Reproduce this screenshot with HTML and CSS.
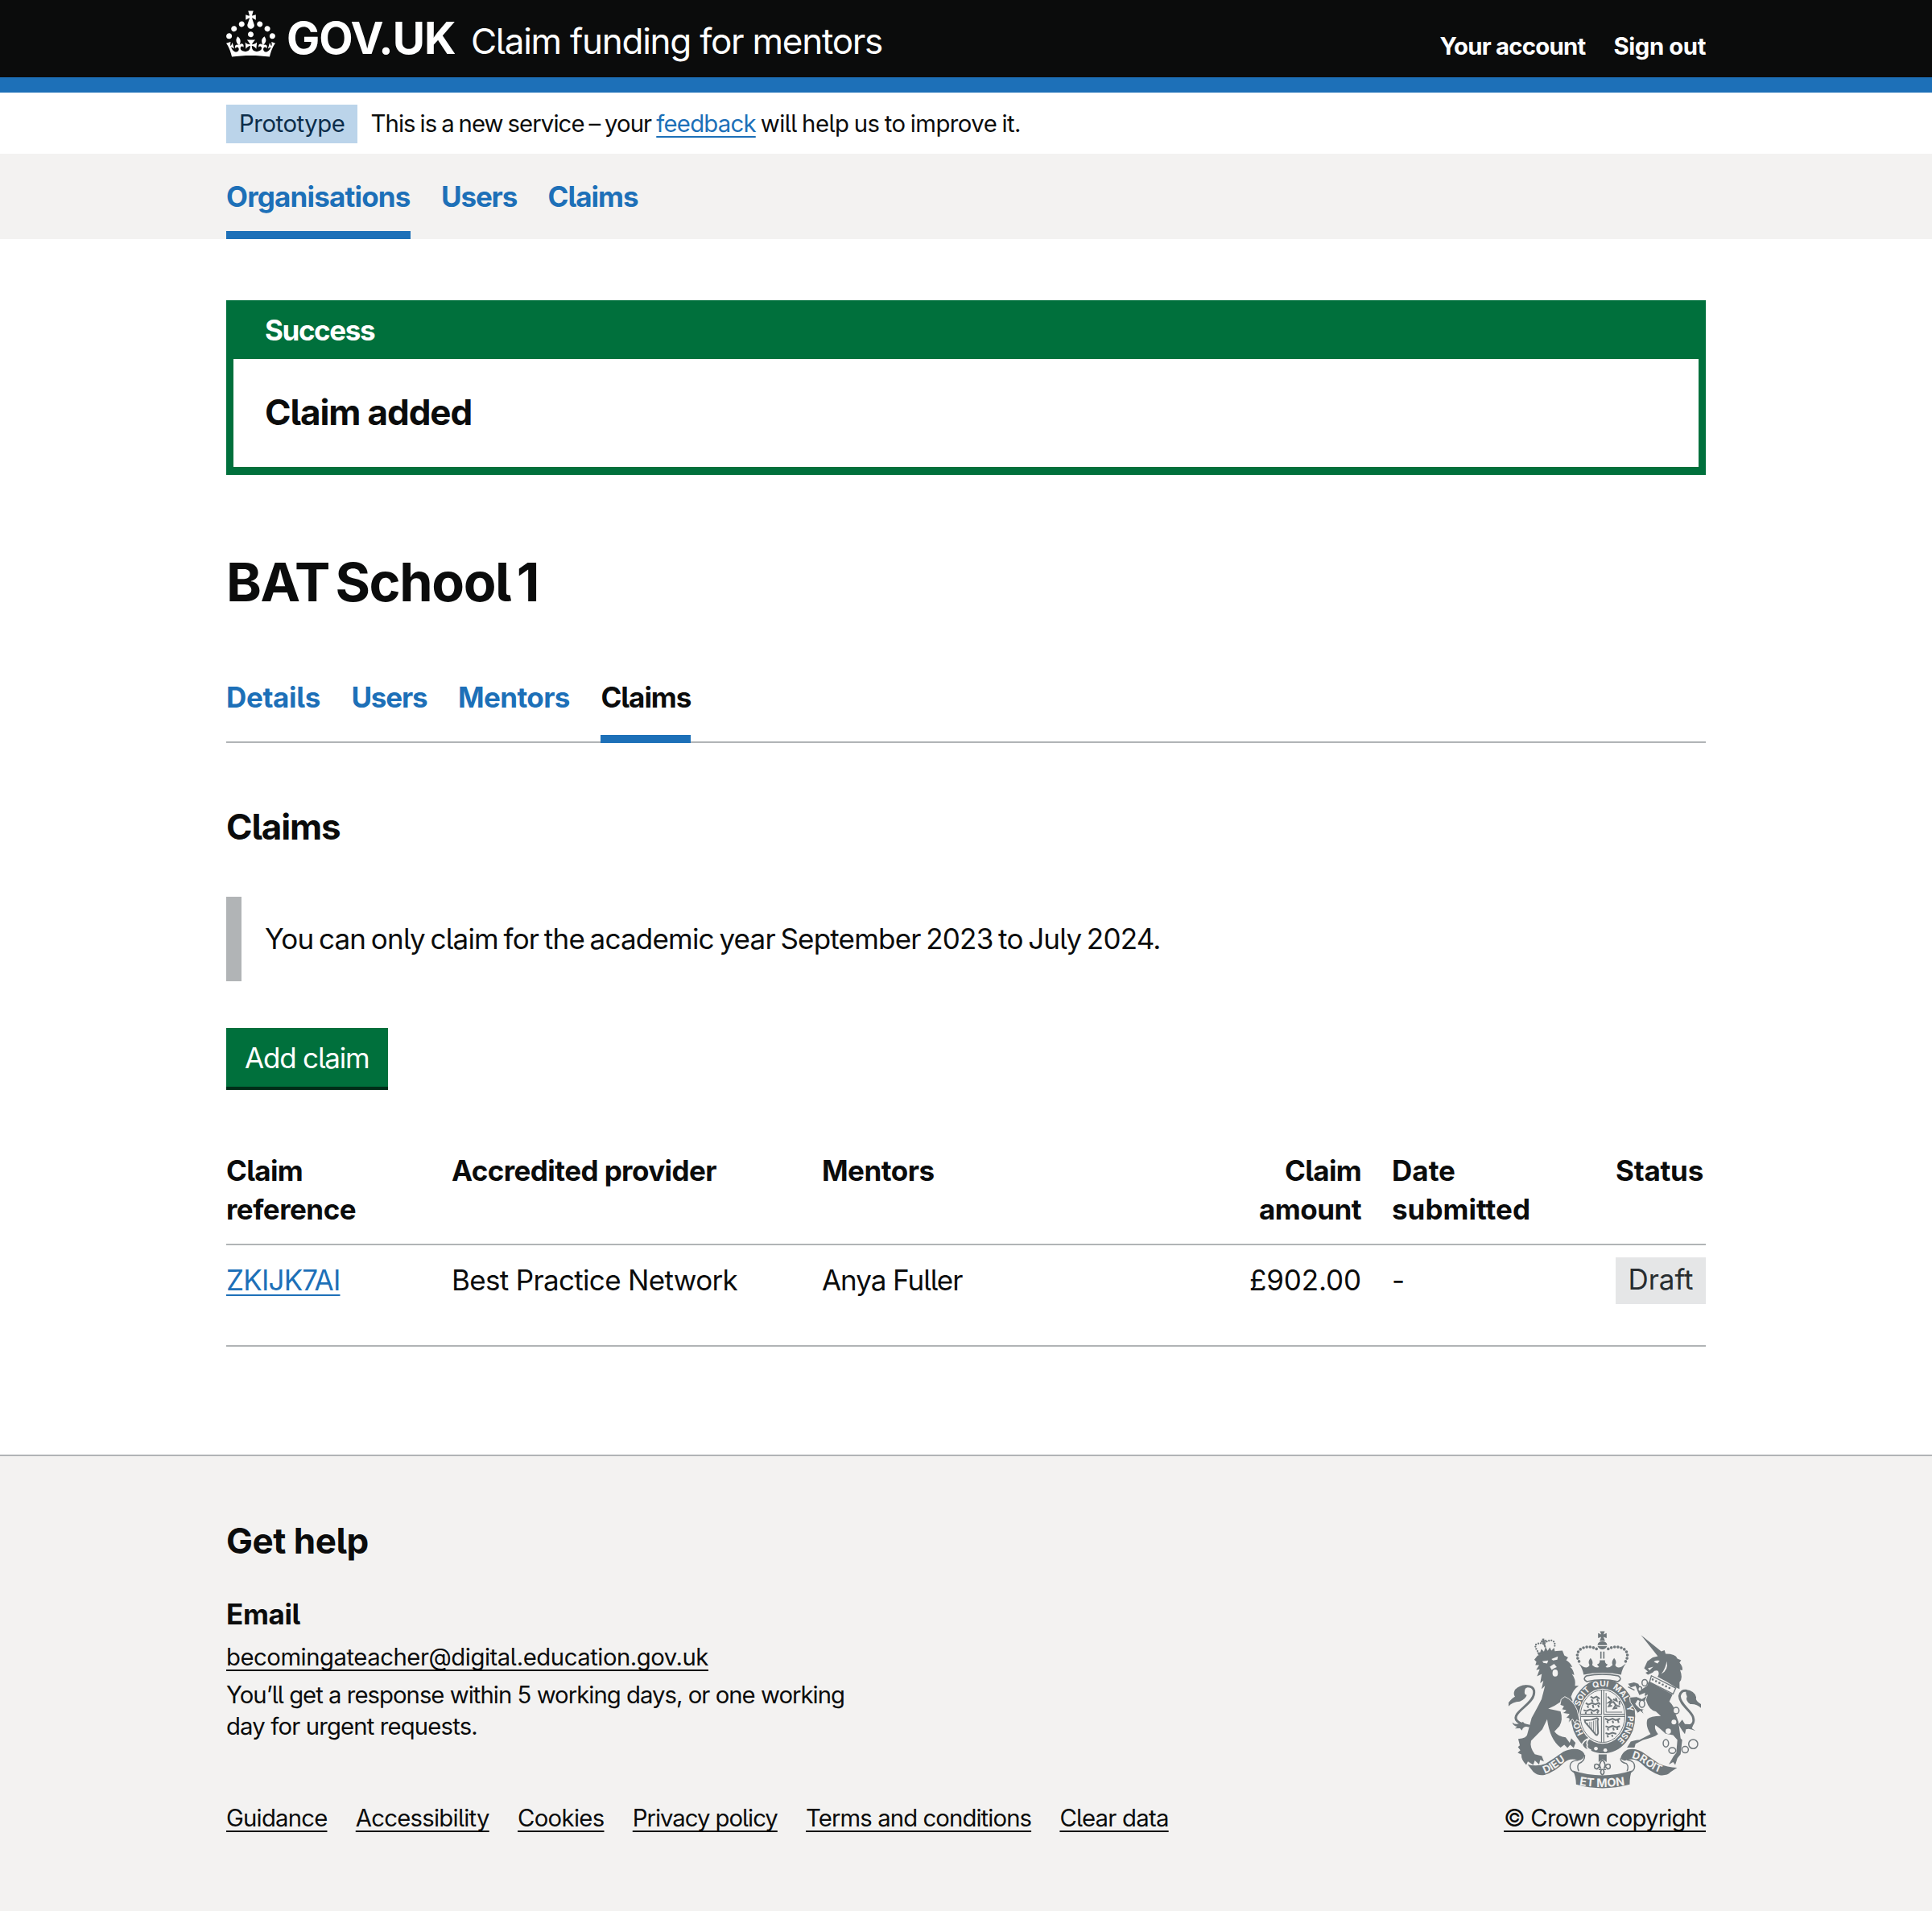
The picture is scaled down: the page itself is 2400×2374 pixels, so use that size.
FILE: index.html
```html
<!DOCTYPE html>
<html lang="en">
<head>
<meta charset="utf-8">
<title>BAT School 1 - Claim funding for mentors - GOV.UK</title>
<link rel="stylesheet" href="styles.css">
</head>
<body>
<header class="header">
  <div class="container header-inner">
    <svg class="crown" viewBox="0 0 32 30" fill="#fff" aria-hidden="true"><path d="M22.6 10.4c-1 .4-2-.1-2.4-1-.4-.9.1-2 1-2.4.9-.4 2 .1 2.4 1s-.1 2-1 2.4m-5.9 6.7c-.9.4-2-.1-2.4-1-.4-.9.1-2 1-2.4.9-.4 2 .1 2.4 1s-.1 2-1 2.4m10.8-3.7c-1 .4-2-.1-2.4-1-.4-.9.1-2 1-2.4.9-.4 2 .1 2.4 1s0 2-1 2.4m3.3 4.8c-1 .4-2-.1-2.4-1-.4-.9.1-2 1-2.4.9-.4 2 .1 2.4 1s-.1 2-1 2.4M17 4.7l2.3 1.2V2.5l-2.3.7-.2-.2.9-3h-3.4l.9 3-.2.2c-.1.1-2.3-.7-2.3-.7v3.4L15 4.7c.1.1.1.2.2.2l-1.3 4c-.1.2-.1.4-.1.6 0 1.1.8 2 1.9 2.2h.7c1-.2 1.9-1.1 1.9-2.1 0-.2 0-.4-.1-.6l-1.3-4c-.1-.2 0-.2.1-.3m-7.6 5.7c.9.4 2-.1 2.4-1 .4-.9-.1-2-1-2.4-.9-.4-2 .1-2.4 1s0 2 1 2.4m-5 3c.9.4 2-.1 2.4-1 .4-.9-.1-2-1-2.4-.9-.4-2 .1-2.4 1s.1 2 1 2.4m-3.2 4.8c.9.4 2-.1 2.4-1 .4-.9-.1-2-1-2.4-.9-.4-2 .1-2.4 1s0 2 1 2.4m14.8 11c4.4 0 8.6.3 12.3.8 1.1-4.5 2.4-7 3.7-8.8l-2.5-.9c.2 1.3.3 1.9 0 2.7-.4-.4-.8-1.1-1.1-2.3l-1.2 4c.7-.5 1.3-.8 2-.9-1.1 2.5-2.6 3.1-3.5 3-1.1-.2-1.7-1.2-1.5-2.1.3-1.2 1.5-1.5 2.1-.1 1.1-2.3-.8-3-2-2.3 1.9-1.9 2.1-3.5.6-5.6-2.1 1.6-2.1 3.2-1.2 5.5-1.2-1.4-3.2-.6-2.5 1.6.9-1.4 2.1-.5 1.9.8-.2 1.1-1.7 2.1-3.5 1.9-2.7-.2-2.9-2.1-2.9-3.6.7-.1 1.9.5 2.9 1.9l.4-4.3c-1.1 1.1-2.1 1.4-3.2 1.4.4-1.2 2.1-3 2.1-3h-5.4s1.7 1.9 2.1 3c-1.1 0-2.1-.2-3.2-1.4l.4 4.3c1-1.4 2.2-2 2.9-1.9-.1 1.5-.2 3.4-2.9 3.6-1.9.2-3.4-.8-3.5-1.9-.2-1.3 1-2.2 1.9-.8.7-2.3-1.2-3-2.5-1.6.9-2.2.9-3.9-1.2-5.5-1.5 2-1.3 3.7.6 5.6-1.2-.7-3.1 0-2 2.3.6-1.4 1.8-1.1 2.1.1.2.9-.3 1.9-1.5 2.1-.9.2-2.4-.5-3.5-3 .6 0 1.2.3 2 .9l-1.2-4c-.3 1.1-.7 1.9-1.1 2.3-.3-.8-.2-1.4 0-2.7l-2.9.9C1.3 23 2.6 25.5 3.7 30c3.7-.5 7.9-.8 12.3-.8"/></svg>
    <span class="wordmark">GOV.UK</span>
    <span class="service-name">Claim funding for mentors</span>
    <nav class="account-nav"><a class="tk-25">Your account</a><a class="tk-14">Sign out</a></nav>
  </div>
</header>
<div class="container phase">
  <span class="tag tag-phase">Prototype</span>
  <p class="phase-text"><span class="tk-31">This is a new service – your</span> <a class="link tk-26">feedback</a> <span class="tk-18">will help us to improve it.</span></p>
</div>
<nav class="primary-nav">
  <ul class="container nav-list">
    <li class="current"><a class="tk-23">Organisations</a></li>
    <li><a class="tk-34">Users</a></li>
    <li><a class="tk-29">Claims</a></li>
  </ul>
</nav>
<main class="container main">
  <section class="banner">
    <h2 class="banner-title">Success</h2>
    <p class="banner-text">Claim added</p>
  </section>
  <h1 class="heading-l">BAT School 1</h1>
  <ul class="tabs">
    <li><a class="tk-10">Details</a></li>
    <li><a class="tk-34">Users</a></li>
    <li><a class="tk-16">Mentors</a></li>
    <li class="current"><a class="tk-29">Claims</a></li>
  </ul>
  <h2 class="heading-m tk-26">Claims</h2>
  <div class="inset">You can only claim for the academic year September 2023 to July 2024.</div>
  <a class="button">Add claim</a>
  <table class="claims">
    <colgroup><col class="c-ref"><col class="c-wide"><col class="c-wide"><col class="c-amount"><col class="c-date"><col class="c-status"></colgroup>
    <thead>
      <tr><th><span class="tk-20">Claim</span><br><span class="tk-15">reference</span></th><th class="tk-16">Accredited provider</th><th class="tk-14">Mentors</th><th class="num"><span class="tk-20">Claim</span><br><span class="tk-15">amount</span></th><th><span class="tk0">Date</span><br><span class="tk0">submitted</span></th><th class="tk-7">Status</th></tr>
    </thead>
    <tbody>
      <tr><td><a class="link tk-23">ZKIJK7AI</a></td><td class="tk-19">Best Practice Network</td><td class="tk-30">Anya Fuller</td><td class="num tk-4">£902.00</td><td>-</td><td><span class="tag tag-status">Draft</span></td></tr>
    </tbody>
  </table>
</main>
<footer class="footer">
  <div class="container footer-inner">
    <div>
      <h2 class="heading-m tk-11">Get help</h2>
      <h3 class="heading-s tk-10">Email</h3>
      <p class="email"><a class="link">becomingateacher@digital.education.gov.uk</a></p>
      <p class="response"><span class="tk-33">You’ll get a response within 5 working days, or one working</span><br><span class="tk-29">day for urgent requests.</span></p>
      <ul class="footer-links">
        <li><a class="link tk-27">Guidance</a></li>
        <li><a class="link tk-25">Accessibility</a></li>
        <li><a class="link tk-23">Cookies</a></li>
        <li><a class="link tk-35">Privacy policy</a></li>
        <li><a class="link tk-31">Terms and conditions</a></li>
        <li><a class="link tk-25">Clear data</a></li>
      </ul>
    </div>
    <div class="copyright">
      <svg class="arms" viewBox="42 45 718 588" aria-hidden="true">
        <defs>
          <path id="garter" pathLength="100" d="M395 472A92 110 0 0 1 395 252A92 110 0 0 1 395 472"/>
          <path id="dieu" d="M177 577Q208 566 234 544Q256 526 280 522"/>
          <path id="etmon" d="M306 620Q392 635 490 618"/>
          <path id="droit" d="M501 519Q530 525 556 546Q585 570 630 580"/>
        </defs>
        <!-- lion -->
        <path d="M150 137Q200 118 243 118L250 136L264 144L257 154Q272 162 280 180L271 178Q285 190 287 210L278 205Q294 225 290 250L304 250Q283 264 275 290Q290 325 300 345L308 384L296 375L290 390L281 374L266 387L268 372L256 370L268 356L243 352L256 342L240 338L247 326L234 322L238 308Q215 325 190 335Q218 340 236 345Q246 375 232 400L213 420Q228 440 255 442L270 462L276 446L292 462L285 482L272 470L262 482L250 470L236 480Q196 450 186 374L168 412L126 455Q120 480 140 505L166 512L174 532L160 526L156 543L140 528L134 545L114 532L108 545Q88 525 90 506L76 500L86 490L77 478L84 472L78 448Q112 445 112 430L128 370Q150 330 165 300L178 250L165 262L172 230L160 240L166 205L148 214L158 188L145 190L156 172L142 172L146 160L138 152Z"/>
        <path class="light" d="M168 158L190 155L186 166L172 164ZM202 150L226 140L224 152L208 155ZM196 178L212 168L222 180L212 184L203 190Z"/>
        <ellipse class="light" cx="216" cy="202" rx="10" ry="13"/>
        <path class="line" stroke-width="9" d="M120 400Q52 385 74 355C92 330 142 305 137 268Q132 248 104 252"/>
        <path d="M110 247Q84 246 66 264Q58 280 66 290Q56 294 42 312V326Q56 310 84 308Q106 298 110 284Q100 284 102 270Q103 258 112 256ZM56 386Q72 400 96 384Q104 398 128 396L108 402Q96 402 92 416L84 408L66 409L74 402Q58 398 56 386Z"/>
        <!-- small crown worn by the lion -->
        <path d="M148 124L154 136L215 123L212 108L202 118L196 106L188 119L180 105L174 122L164 112L160 125Z"/>
        <path class="line beads" stroke-width="7" stroke-dasharray="0 9" d="M150 120Q134 96 150 93Q164 88 174 94Q184 80 204 80Q220 88 212 108"/>
        <path d="M162 80L168 82L167 74L175 73L175 80L182 77L183 85L176 86L182 106H176L169 88L163 88Z"/>
        <!-- unicorn -->
        <path d="M536 60L612 121L624 117L628 130Q666 130 672 148L686 154L680 163Q694 180 690 192L682 190Q694 222 680 236V262L666 256Q630 232 598 216Q606 206 600 194Q588 190 580 200L562 208L553 201L562 196L548 184L560 158L580 144L599 139Z"/>
        <path class="light" d="M584 160Q590 152 606 156L598 166ZM562 184L582 178L568 192ZM632 158Q640 190 612 205Q628 186 632 158Z"/>
        <path class="line" stroke-width="4" d="M575 212L666 258L656 280L568 236Z"/>
        <path class="line beads" stroke-width="8" stroke-dasharray="0 14" d="M580 226L654 264"/>
        <path d="M564 234L654 282L642 308Q664 330 664 352L676 384L684 446L690 452L684 505L672 520L664 545L656 534L640 543L658 512L668 500L672 452L656 434L628 428L608 410L590 396Q584 408 600 430Q586 442 544 452L516 466L512 480H484L498 458Q520 450 530 452L572 430Q552 400 560 374Q572 362 610 362L592 346Q566 340 556 306L550 282Z"/>
        <path d="M566 244L556 274L530 284L516 250L498 256L488 242L510 237L526 242L538 264Z"/>
        <path class="line" stroke-width="9" d="M696 400Q742 402 730 365C722 342 680 318 680 288Q684 264 708 268"/>
        <path d="M704 264Q736 268 742 292Q738 306 760 318V332Q744 316 720 318Q700 304 708 290L704 278ZM676 394L690 376L700 392L732 394L726 408L740 418Q716 406 704 412L700 430L690 416Z"/>
        <!-- garter and shield -->
        <ellipse class="rim" cx="395" cy="363" rx="122" ry="141"/>
        <ellipse class="light" cx="393" cy="363" rx="88" ry="103"/>
        <ellipse class="line" stroke-width="3" cx="393" cy="363" rx="83" ry="98"/>
        <g class="motto">
          <text><textPath href="#garter" startOffset="14">HO</textPath></text>
          <text><textPath href="#garter" startOffset="30.5">SOIT</textPath></text>
          <text><textPath href="#garter" startOffset="44.2">QUI</textPath></text>
          <text><textPath href="#garter" startOffset="55.6">MAL</textPath></text>
          <text><textPath href="#garter" startOffset="69">Y</textPath></text>
          <text><textPath href="#garter" startOffset="75">PENSE</textPath></text>
        </g>
        <path class="line" stroke-width="12" d="M393 266V460M311 360H475"/>
        <path stroke="#f3f2f1" stroke-width="5" d="M393 266V460M311 360H475"/>
        <g class="line" stroke-width="6">
          <path d="M348 290l10 6l12-6l12 8M352 300l4 10M372 298l4 10M330 314l10 6l14-6l12 5l12-6l6 6M336 324l4 8M356 320l3 12M376 320l3 10M322 340l10 4l14-6l14 6l12-6l8 8M330 348v6M350 346l4 8M372 346l4 6"/>
          <path d="M402 372l14 6l14-6l12 6l16-6M410 380l3 9M430 380l3 9M450 378l3 10M404 400l12 5l14-6l14 5l14-4M412 408l2 8M432 406l3 10M448 406v8M404 426l12 4l14-5l14 4M410 434l4 8M428 432l2 8"/>
          <path d="M412 290l14 14l-10 8l18-2l10 14l14 2M432 300l14 6l-4-12M424 312l-8 14l12-2M444 318l-10 16l14-2M456 306v14"/>
        </g>
        <path class="line" stroke-width="3" d="M406 276V348H466"/>
        <path class="line" stroke-width="6" d="M326 378Q350 380 372 370Q380 374 374 380L376 426Q372 440 364 428L328 386Z"/>
        <path class="line" stroke-width="2.5" d="M338 388V396M345 384V404M352 384V414M359 380V422M366 378V428"/>
        <path class="knot" d="M316 470Q322 452 344 446Q330 458 336 470Q330 484 350 490Q326 492 316 470Z"/>
        <circle class="light" cx="368" cy="484" r="7"/><circle class="light" cx="403" cy="490" r="7"/>
        <path d="M378 506H408V534L393 524L378 534Z"/>
        <!-- paws and hooves that hold the garter -->
        <path class="paw" d="M252 290Q284 304 298 340L309 384L296 377L290 391L281 374L266 387L268 372L256 370L268 356L243 352L256 342L240 338L247 326L234 322L238 300Z"/>
        <path class="paw" d="M560 284L548 316L524 304L516 318L532 334L552 338L542 342L548 358L534 344L524 352L496 310L494 292L520 290L540 298Z"/>
        <path class="line" stroke-width="4" d="M488 254L512 266"/>
        <g class="chain">
          <ellipse cx="550" cy="238" rx="10" ry="12"/><ellipse cx="532" cy="262" rx="7" ry="9"/><ellipse cx="540" cy="317" rx="10" ry="13"/><ellipse cx="667" cy="342" rx="11" ry="12"/><ellipse cx="629" cy="464" rx="10" ry="14"/><ellipse cx="653" cy="491" rx="13" ry="11"/><ellipse cx="701" cy="488" rx="12" ry="12"/><circle cx="731" cy="467" r="17"/>
        </g>
        <circle class="light" cx="659" cy="385" r="9"/><circle class="light" cx="638" cy="419" r="10"/>
        <!-- fleur-de-lis -->
        <path class="line" stroke-width="5" d="M392 526Q376 542 386 558Q376 536 364 544Q358 558 372 560L380 552M392 526Q408 542 398 558Q408 536 420 544Q426 558 412 560L404 552M378 562H406M388 564Q382 576 392 582Q402 576 396 564"/>
        <!-- imperial crown -->
        <path d="M383 46H401L396 58L408 53V72L396 67L402 82H382L388 67L376 72V53L388 58ZM374 98Q376 84 392 84Q408 84 410 98ZM374 102H410Q404 114 392 114Q380 114 374 102ZM384 122H389V148H384ZM395 122H400V148H395Z"/>
        <path class="line beads" stroke-width="11" stroke-dasharray="0 12.5" d="M370 112C352 102 330 102 312 112C292 126 296 150 312 168M414 112C432 102 454 102 472 112C492 126 488 150 472 168"/>
        <path d="M304 166L320 178Q338 186 344 172Q336 160 348 146Q360 160 354 172Q366 184 380 180L372 170Q384 166 382 154H402Q400 166 412 170L404 180Q418 184 430 172Q424 160 436 146Q448 160 440 172Q446 186 464 178L480 166Q466 184 462 208Q392 194 322 208Q318 184 304 166Z"/>
        <path class="cushion" d="M332 213Q392 200 452 213Q468 224 450 234Q392 220 334 234Q316 224 332 213Z"/>
        <!-- ribbon -->
        <path d="M113 543Q150 552 180 540Q216 518 246 496Q272 482 300 486Q322 492 326 508Q320 528 302 528Q272 516 250 536Q214 572 176 582Q150 586 134 570ZM671 555Q634 554 604 540Q568 516 540 496Q512 480 486 488Q464 500 460 520Q470 534 484 526Q512 518 536 538Q568 570 606 583Q634 586 646 572ZM282 566Q392 602 502 566Q494 586 494 618Q392 646 294 618Q294 590 282 566Z"/>
        <path class="line" stroke-width="4" d="M326 508Q328 530 304 540Q296 552 304 568M302 528Q268 528 272 556Q276 568 290 574M460 520Q458 534 482 540Q492 552 484 568M484 526Q516 530 512 556Q508 568 494 574"/>
        <g class="ribbon-text">
          <text><textPath href="#dieu">DIEU</textPath></text>
          <text class="wide"><textPath href="#etmon">ET MON</textPath></text>
          <text><textPath href="#droit">DROIT</textPath></text>
        </g>
      </svg>
      <a class="link tk-28">© Crown copyright</a>
    </div>
  </div>
</footer>
</body>
</html>
```
FILE: styles.css
```css
* { box-sizing: border-box; }
body { margin: 0; background: #fff; color: #0b0c0c; font: 400 35px/48px Inter, "Noto Sans", sans-serif; font-feature-settings: "cv05"; white-space: nowrap; }
h1, h2, h3, p, ul { margin: 0; padding: 0; }
ul { list-style: none; }
.container { width: 1838px; margin: 0 auto; }
.link { color: #1d70b8; text-decoration: underline; text-decoration-thickness: 2px; text-underline-offset: 5px; text-decoration-skip-ink: none; }

/* Tracking steps, in thousandths of an em */
.tk0 { letter-spacing: 0.0005em; }
.tk-4 { letter-spacing: -0.0036em; }
.tk-7 { letter-spacing: -0.0068em; }
.tk-10 { letter-spacing: -0.01em; }
.tk-11 { letter-spacing: -0.011em; }
.tk-14 { letter-spacing: -0.014em; }
.tk-15 { letter-spacing: -0.015em; }
.tk-16 { letter-spacing: -0.0165em; }
.tk-18 { letter-spacing: -0.018em; }
.tk-19 { letter-spacing: -0.019em; }
.tk-20 { letter-spacing: -0.02em; }
.tk-23 { letter-spacing: -0.0233em; }
.tk-25 { letter-spacing: -0.0254em; }
.tk-26 { letter-spacing: -0.026em; }
.tk-27 { letter-spacing: -0.027em; }
.tk-28 { letter-spacing: -0.0284em; }
.tk-29 { letter-spacing: -0.0289em; }
.tk-30 { letter-spacing: -0.03em; }
.tk-31 { letter-spacing: -0.031em; }
.tk-33 { letter-spacing: -0.0333em; }
.tk-34 { letter-spacing: -0.0339em; }
.tk-35 { letter-spacing: -0.0347em; }

.header { height: 115px; background: #0b0c0c; border-bottom: 19px solid #1d70b8; color: #fff; }
.header-inner { display: flex; align-items: baseline; padding-top: 13px; }
.crown { width: 61px; height: 58px; align-self: flex-start; }
.wordmark { margin-left: 14px; font-size: 55px; font-weight: 700; line-height: 68px; letter-spacing: -0.018em; }
.service-name { margin-left: 19.5px; font-size: 44px; letter-spacing: -0.0285em; }
.account-nav { display: flex; gap: 35px; align-self: flex-start; margin: 20.5px 0 0 auto; font-size: 29.3px; font-weight: 700; }

.phase { display: flex; gap: 17px; height: 76px; padding-top: 15px; font-size: 29.3px; line-height: 47px; }
.phase-text { letter-spacing: -0.026em; word-spacing: -0.05em; }
.tag { display: inline-block; }
.tag-phase { height: 48px; padding: 0 15px 0 16px; background: #bbd4ea; color: #0c2d4a; letter-spacing: -0.0145em; }

.primary-nav { background: #f3f2f1; color: #1d70b8; font-weight: 700; }
.nav-list { display: flex; gap: 38.5px; height: 106px; padding-top: 29px; }
.nav-list .current { border-bottom: 10px solid #1d70b8; }

.main { padding-top: 76px; }
.banner { height: 217px; border: 9px solid #00703c; border-width: 0 9px 10px; }
.banner-title { height: 73px; padding: 13px 0 0 39px; background: #00703c; color: #fff; font-size: 35px; line-height: 48px; letter-spacing: -0.04em; }
.banner-text { padding: 38px 0 0 39px; font-size: 44px; font-weight: 700; line-height: 56px; letter-spacing: -0.0251em; }
.heading-l { margin-top: 97px; font-size: 66.5px; line-height: 72px; letter-spacing: -0.0215em; word-spacing: -0.1em; }
.tabs { display: flex; gap: 38.5px; margin-top: 83px; border-bottom: 2px solid #b1b4b6; color: #1d70b8; font-weight: 700; }
.tabs .current { margin-bottom: -2px; padding-bottom: 23px; border-bottom: 10px solid #1d70b8; color: #0b0c0c; }
.heading-m { font-size: 44px; line-height: 56px; }
.heading-s { font-size: 35px; line-height: 48px; }
.main .heading-m { margin-top: 76px; }
.inset { margin-top: 59px; padding: 28px 0 29px 29px; border-left: 19px solid #b1b4b6; letter-spacing: -0.0228em; word-spacing: -0.07em; }
.button { display: block; width: 201px; height: 73px; margin-top: 58px; padding: 13px 23px 0; background: #00703c; box-shadow: 0 4px 0 #002d18; color: #fff; letter-spacing: -0.034em; }

.claims { width: 1838px; margin-top: 80px; table-layout: fixed; border-collapse: separate; border-spacing: 0; }
.c-ref { width: 280px; }
.c-wide { width: 460px; }
.c-amount { width: 248px; }
.c-date { width: 278px; }
.c-status { width: 112px; }
.claims th, .claims td { padding: 0; border-bottom: 2px solid #b1b4b6; text-align: left; vertical-align: top; }
.claims th { height: 117px; }
.claims td { height: 126px; padding-top: 19px; }
.claims .num { padding-right: 38px; text-align: right; }
.tag-status { display: block; height: 58px; margin-top: -4px; padding: 0 15.5px; background: #e5e6e7; color: #282d30; line-height: 55px; letter-spacing: -0.0017em; }

.footer { margin-top: 134px; height: 567px; border-top: 2px solid #b1b4b6; background: #f3f2f1; font-size: 29.3px; line-height: 38.5px; }
.footer .link { color: #0b0c0c; }
.footer-inner { display: flex; justify-content: space-between; align-items: flex-end; padding-top: 76.7px; }
.footer .heading-s { margin-top: 39.6px; }
.email { margin-top: 10.7px; letter-spacing: -0.0162em; }
.response { margin-top: 9px; }
.footer-links { display: flex; gap: 35.3px; margin-top: 76px; }
.copyright { display: flex; flex-direction: column; align-items: center; gap: 18.5px; }
.arms { display: block; width: 239px; height: 196px; fill: #6f777b; font-family: Inter, "Noto Sans", sans-serif; font-weight: 700; }
.arms .light { fill: #f3f2f1; }
.arms .line { fill: none; stroke: #6f777b; }
.arms .beads { stroke-linecap: round; }
.arms .rim, .arms .knot { stroke: #f3f2f1; stroke-width: 5; }
.arms .paw { stroke: #f3f2f1; stroke-width: 3; }
.arms .chain { fill: #f3f2f1; stroke: #6f777b; stroke-width: 4.5; }
.arms .cushion { fill: #f3f2f1; stroke: #6f777b; stroke-width: 5; }
.arms .motto { fill: #f3f2f1; font-size: 31px; }
.arms .ribbon-text { fill: #f3f2f1; font-size: 39px; }
.arms .ribbon-text .wide { font-size: 43px; }
```
